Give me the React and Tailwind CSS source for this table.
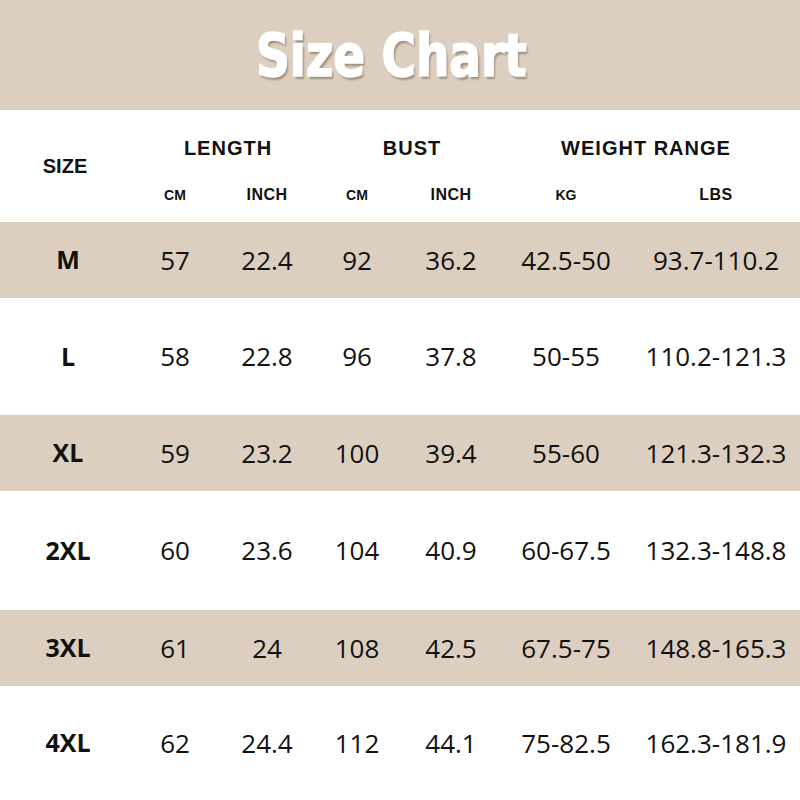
import React from 'react';

const rows = [
    { size: 'M', cells: ['57', '22.4', '92', '36.2', '42.5-50', '93.7-110.2'], shade: true, h: 'h-[76px]' },
    { size: 'L', cells: ['58', '22.8', '96', '37.8', '50-55', '110.2-121.3'], shade: false, h: 'h-[117px]' },
    { size: 'XL', cells: ['59', '23.2', '100', '39.4', '55-60', '121.3-132.3'], shade: true, h: 'h-[76px]' },
    { size: '2XL', cells: ['60', '23.6', '104', '40.9', '60-67.5', '132.3-148.8'], shade: false, h: 'h-[119px]' },
    { size: '3XL', cells: ['61', '24', '108', '42.5', '67.5-75', '148.8-165.3'], shade: true, h: 'h-[76px]' },
    { size: '4XL', cells: ['62', '24.4', '112', '44.1', '75-82.5', '162.3-181.9'], shade: false, h: 'h-[114px]' },
];

const cols = 'grid grid-cols-[128px_94px_90px_90px_98px_132px_168px]';

export default function App() {
    return (
        <div className="w-[800px] h-[800px] bg-white text-[#111] overflow-hidden">
            {/* Title band */}
            <div className="h-[110px] bg-[#dccfbf] flex items-center justify-center pr-[18px]">
                <h1
                    className="text-[58px] font-bold text-white leading-none scale-x-[0.9] pt-[2px]"
                    style={{ fontFamily: '"DejaVu Sans Condensed", "DejaVu Sans", sans-serif', textShadow: '2px 3px 2px rgba(90,70,50,0.45)', WebkitTextStroke: '1.5px white' }}
                >
                    Size Chart
                </h1>
            </div>

            {/* Column headers */}
            <div className={`${cols} grid-rows-[76px_36px] h-[112px] font-bold`} style={{ fontFamily: '"Liberation Sans", Arial, sans-serif' }}>
                <div className="row-span-2 flex items-center justify-center pl-[2px] text-[20px]">SIZE</div>
                <div className="col-span-2 flex items-center justify-center pl-[16px] text-[20px] tracking-[1px]">LENGTH</div>
                <div className="col-span-2 flex items-center justify-center pl-[12px] text-[20px] tracking-[1px]">BUST</div>
                <div className="col-span-2 flex items-center justify-center pr-[8px] text-[20px] tracking-[1px]">WEIGHT RANGE</div>
                <div className="flex justify-center pt-[2px] leading-none text-[14px]">CM</div>
                <div className="flex justify-center pt-[1px] leading-none text-[16px] tracking-[0.5px]">INCH</div>
                <div className="flex justify-center pt-[2px] leading-none text-[14px]">CM</div>
                <div className="flex justify-center pt-[1px] leading-none text-[16px] tracking-[0.5px]">INCH</div>
                <div className="flex justify-center pt-[2px] leading-none text-[14px]">KG</div>
                <div className="flex justify-center pt-[1px] leading-none text-[16px] tracking-[0.5px]">LBS</div>
            </div>

            {/* Data rows */}
            {rows.map((r) => (
                <div
                    key={r.size}
                    className={`${cols} ${r.h} ${r.shade ? 'bg-[#dccfbf]' : 'bg-white'} items-center`}
                    style={{ fontFamily: '"Open Sans", "Noto Sans", sans-serif' }}
                >
                    <div className="text-center pl-[8px] text-[25px] font-bold">{r.size}</div>
                    {r.cells.map((c, i) => (
                        <div key={i} className="text-center text-[26px] whitespace-nowrap">{c}</div>
                    ))}
                </div>
            ))}
        </div>
    );
}
